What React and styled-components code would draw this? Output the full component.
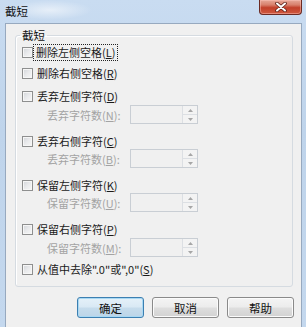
import styled, { createGlobalStyle } from 'styled-components';

const GlobalStyle = createGlobalStyle`
  html, body {
    margin: 0;
    padding: 0;
  }
  body {
    font-family: "Noto Sans CJK SC", "Noto Sans", sans-serif;
    background: #c3d7ed;
  }
  #root {
    width: 306px;
    height: 327px;
    overflow: hidden;
  }
`;

const Window = styled.div`
  width: 306px;
  height: 327px;
  display: flex;
  flex-direction: column;
  background:
    radial-gradient(ellipse 60px 14px at 50px 10px, rgba(255,255,255,0.55), rgba(255,255,255,0) 70%),
    linear-gradient(180deg, #c9dcf1 0%, #bfd4eb 40%, #c4d8ee 100%);
`;

const TitleBar = styled.div`
  height: 23px;
  flex: 0 0 23px;
  display: flex;
  align-items: flex-start;
  justify-content: space-between;
  padding-left: 5px;
`;

const Title = styled.span`
  font-size: 11.5px;
  line-height: 22px;
  color: #111;
`;

const CloseButton = styled.div`
  width: 43px;
  height: 15px;
  margin-right: 4px;
  border: 1px solid #6b2a22;
  border-top: none;
  border-radius: 0 0 4px 4px;
  box-sizing: border-box;
  display: flex;
  align-items: center;
  justify-content: center;
  background: linear-gradient(180deg, #e6a898 0%, #d8806c 35%, #c2402a 55%, #cf5a40 100%);
  box-shadow: inset 0 0 0 1px rgba(255, 200, 190, 0.45);
`;

const Panel = styled.div`
  flex: 1;
  margin: 0 4px 0 5px;
  border: 1px solid #97a9bf;
  border-bottom: none;
  background: #f0f0f0;
  display: flex;
  flex-direction: column;
`;

const Group = styled.fieldset`
  margin: 4px 8px 0 9px;
  padding: 2px 5px 9px 5px;
  border: 1px solid #d5dbe1;
  border-radius: 3px;
  box-shadow: inset 1px 1px 0 #fff;
  display: flex;
  flex-direction: column;
  min-width: 0;
`;

const Legend = styled.legend`
  font-size: 11.5px;
  line-height: 14px;
  padding: 0 2px;
  margin-left: -1px;
  color: #111;
`;

const OptionRow = styled.div`
  display: flex;
  align-items: center;
  height: 16px;
  margin-top: ${p => p.$top}px;
`;

const Box = styled.span`
  width: 11px;
  height: 11px;
  box-sizing: border-box;
  margin-left: 1px;
  border: 1px solid #8e8f8f;
  background: linear-gradient(135deg, #d2d5d9 0%, #e9eaec 50%, #f8f8f8 100%);
  box-shadow: inset 0 0 0 1px #f6f6f6;
  flex: 0 0 auto;
`;

const Label = styled.span`
  font-size: 11px;
  line-height: 13px;
  color: #1a1a1a;
  margin-left: ${p => (p.$focused ? '1px' : '4px')};
  padding: ${p => (p.$focused ? '1px 2px' : '0')};
  outline: ${p => (p.$focused ? '1px dotted #222' : 'none')};
  white-space: nowrap;
`;

const SubRow = styled.div`
  display: flex;
  align-items: center;
  height: 19px;
  margin-top: ${p => p.$top}px;
  padding-left: 26px;
`;

const SubLabel = styled.span`
  width: 83px;
  font-size: 11px;
  color: #a3a3a3;
  white-space: nowrap;
`;

const Spin = styled.div`
  width: 68px;
  height: 19px;
  box-sizing: border-box;
  border: 1px solid #c9ced4;
  display: flex;
  justify-content: flex-end;
`;

const SpinButtons = styled.div`
  width: 14px;
  display: flex;
  flex-direction: column;
  border-left: 1px solid #dcdfe3;
`;

const SpinHalf = styled.div`
  flex: 1;
  display: flex;
  align-items: center;
  justify-content: center;
  background: #f3f3f3;
  border-top: ${p => (p.$down ? '1px solid #dcdfe3' : 'none')};
`;

const ButtonRow = styled.div`
  display: flex;
  justify-content: flex-end;
  gap: 8px;
  margin-top: 10px;
  padding-right: 7px;
`;

const Button = styled.div`
  width: 67px;
  height: 21px;
  box-sizing: border-box;
  border-radius: 3px;
  border: 1px solid ${p => (p.$primary ? '#3c7fb1' : '#8a8a8a')};
  background: ${p =>
    p.$primary
      ? 'linear-gradient(180deg, #e5f1f9 0%, #d9e9f4 48%, #c6dcec 52%, #bcd5e8 100%)'
      : 'linear-gradient(180deg, #f4f4f4 0%, #ececec 48%, #dedede 52%, #d2d2d2 100%)'};
  box-shadow: ${p =>
    p.$primary ? 'inset 0 0 0 1px #a8d8f3' : 'inset 0 0 0 1px #fbfbfb'};
  display: flex;
  align-items: center;
  justify-content: center;
  font-size: 11.5px;
  color: #111;
`;

function Arrow({ down }) {
  return (
    <svg width="5" height="3" viewBox="0 0 5 3">
      <path d={down ? 'M0 0 L5 0 L2.5 3 Z' : 'M0 3 L5 3 L2.5 0 Z'} fill="#a6a6a6" />
    </svg>
  );
}

function SpinBox() {
  return (
    <Spin>
      <SpinButtons>
        <SpinHalf><Arrow /></SpinHalf>
        <SpinHalf $down><Arrow down /></SpinHalf>
      </SpinButtons>
    </Spin>
  );
}

const options = [
  { text: '删除左侧空格', key: 'L', top: 0, focused: true },
  { text: '删除右侧空格', key: 'R', top: 5 },
  { text: '丢弃左侧字符', key: 'D', top: 7, sub: { text: '丢弃字符数', key: 'N', top: 1 } },
  { text: '丢弃右侧字符', key: 'C', top: 9, sub: { text: '丢弃字符数', key: 'B', top: 0 } },
  { text: '保留左侧字符', key: 'K', top: 9, sub: { text: '保留字符数', key: 'U', top: 0 } },
  { text: '保留右侧字符', key: 'P', top: 9, sub: { text: '保留字符数', key: 'M', top: 1 } },
  { text: '从值中去除".0"或",0"', key: 'S', top: 4 },
];

export default function App() {
  return (
    <>
      <GlobalStyle />
      <Window>
        <TitleBar>
          <Title>截短</Title>
          <CloseButton>
            <svg width="12" height="10" viewBox="0 0 12 10">
              <path d="M2 1.5 L10 8.5 M10 1.5 L2 8.5" stroke="#5a2018" strokeWidth="3.6" strokeLinecap="round" />
              <path d="M2 1.5 L10 8.5 M10 1.5 L2 8.5" stroke="#fff" strokeWidth="2" strokeLinecap="round" />
            </svg>
          </CloseButton>
        </TitleBar>
        <Panel>
          <Group>
            <Legend>截短</Legend>
            {options.map((o, i) => (
              <div key={i}>
                <OptionRow $top={o.top}>
                  <Box />
                  <Label $focused={o.focused}>
                    {o.text}(<u>{o.key}</u>)
                  </Label>
                </OptionRow>
                {o.sub && (
                  <SubRow $top={o.sub.top}>
                    <SubLabel>
                      {o.sub.text}(<u>{o.sub.key}</u>):
                    </SubLabel>
                    <SpinBox />
                  </SubRow>
                )}
              </div>
            ))}
          </Group>
          <ButtonRow>
            <Button $primary>确定</Button>
            <Button>取消</Button>
            <Button>帮助</Button>
          </ButtonRow>
        </Panel>
      </Window>
    </>
  );
}
